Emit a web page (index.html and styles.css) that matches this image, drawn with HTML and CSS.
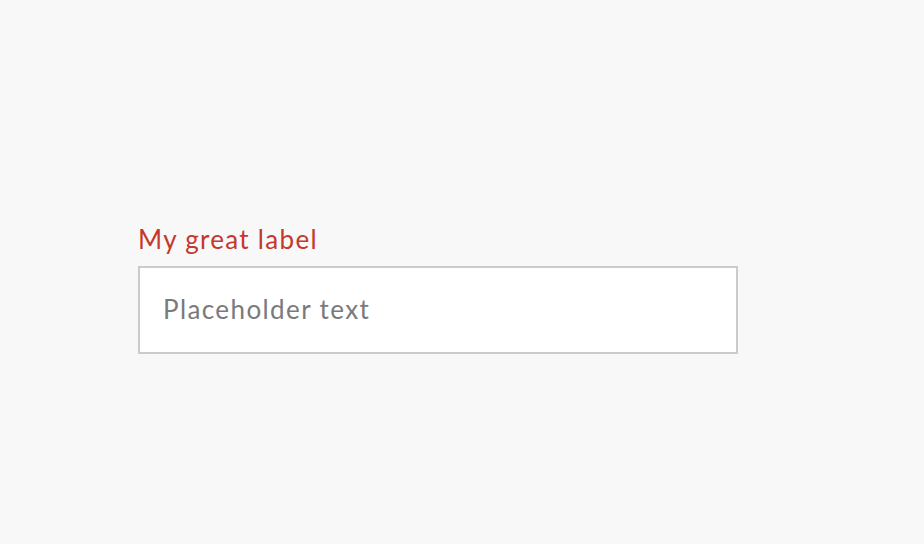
FILE: index.html
```html
<!DOCTYPE html>
<html>
<head>
<meta charset="utf-8">
<link rel="stylesheet" href="styles.css">
</head>
<body>
<div class="page">
  <div class="field">
    <label class="label" for="f">My great label</label>
    <input class="input" id="f" type="text" placeholder="Placeholder text">
  </div>
</div>
</body>
</html>
```
FILE: styles.css
```css
html, body {
  margin: 0;
  padding: 0;
  background: #f8f8f8;
  height: 100%;
}
.page {
  padding: 219px 0 0 138px;
}
.field {
  display: flex;
  flex-direction: column;
  width: 600px;
  gap: 7px;
}
.label {
  font-family: Lato, "Open Sans", sans-serif;
  font-size: 26px;
  line-height: 40px;
  letter-spacing: 1.3px;
  color: #c4392c;
}
.input {
  box-sizing: border-box;
  width: 600px;
  height: 88px;
  border: 2px solid #cbcbcb;
  background: #fff;
  padding: 0 23px 3px;
  font-family: Lato, "Open Sans", sans-serif;
  font-size: 26px;
  letter-spacing: 1.4px;
  color: #333;
  outline: none;
  margin: 0;
}
.input::placeholder {
  color: #7a7a7a;
}
```
